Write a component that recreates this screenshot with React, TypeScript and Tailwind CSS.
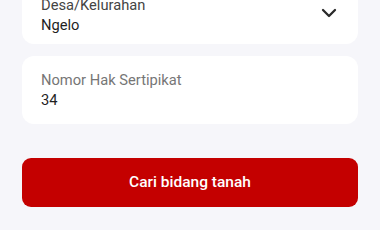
import { ChevronDown } from "lucide-react";

export default function App() {
  return (
    <div className="h-[230px] w-[380px] overflow-hidden bg-[#f6f6fa] font-['Roboto',sans-serif]">
      <div className="-mt-[19px] flex flex-col px-[22px]">
        <div className="flex items-center justify-between rounded-[12px] bg-white pb-[9px] pl-[19px] pr-[17px] pt-[14px]">
          <div className="flex flex-col text-[14.7px] leading-[20px]">
            <span className="text-[#444444]">Desa/Kelurahan</span>
            <span className="text-[#1f1f1f]">Ngelo</span>
          </div>
          <ChevronDown size={24} strokeWidth={2.3} className="-mt-[5px] text-[#2a2a2a]" />
        </div>

        <div className="mt-[12px] flex flex-col rounded-[12px] bg-white py-[14px] pl-[19px] text-[14.7px] leading-[20px]">
          <span className="text-[#767676]">Nomor Hak Sertipikat</span>
          <span className="text-[#1f1f1f]">34</span>
        </div>

        <button className="mt-[34px] flex h-[49px] items-center justify-center rounded-[9px] bg-[#c40000] text-[15.5px] font-medium text-white">
          Cari bidang tanah
        </button>
      </div>
    </div>
  );
}
